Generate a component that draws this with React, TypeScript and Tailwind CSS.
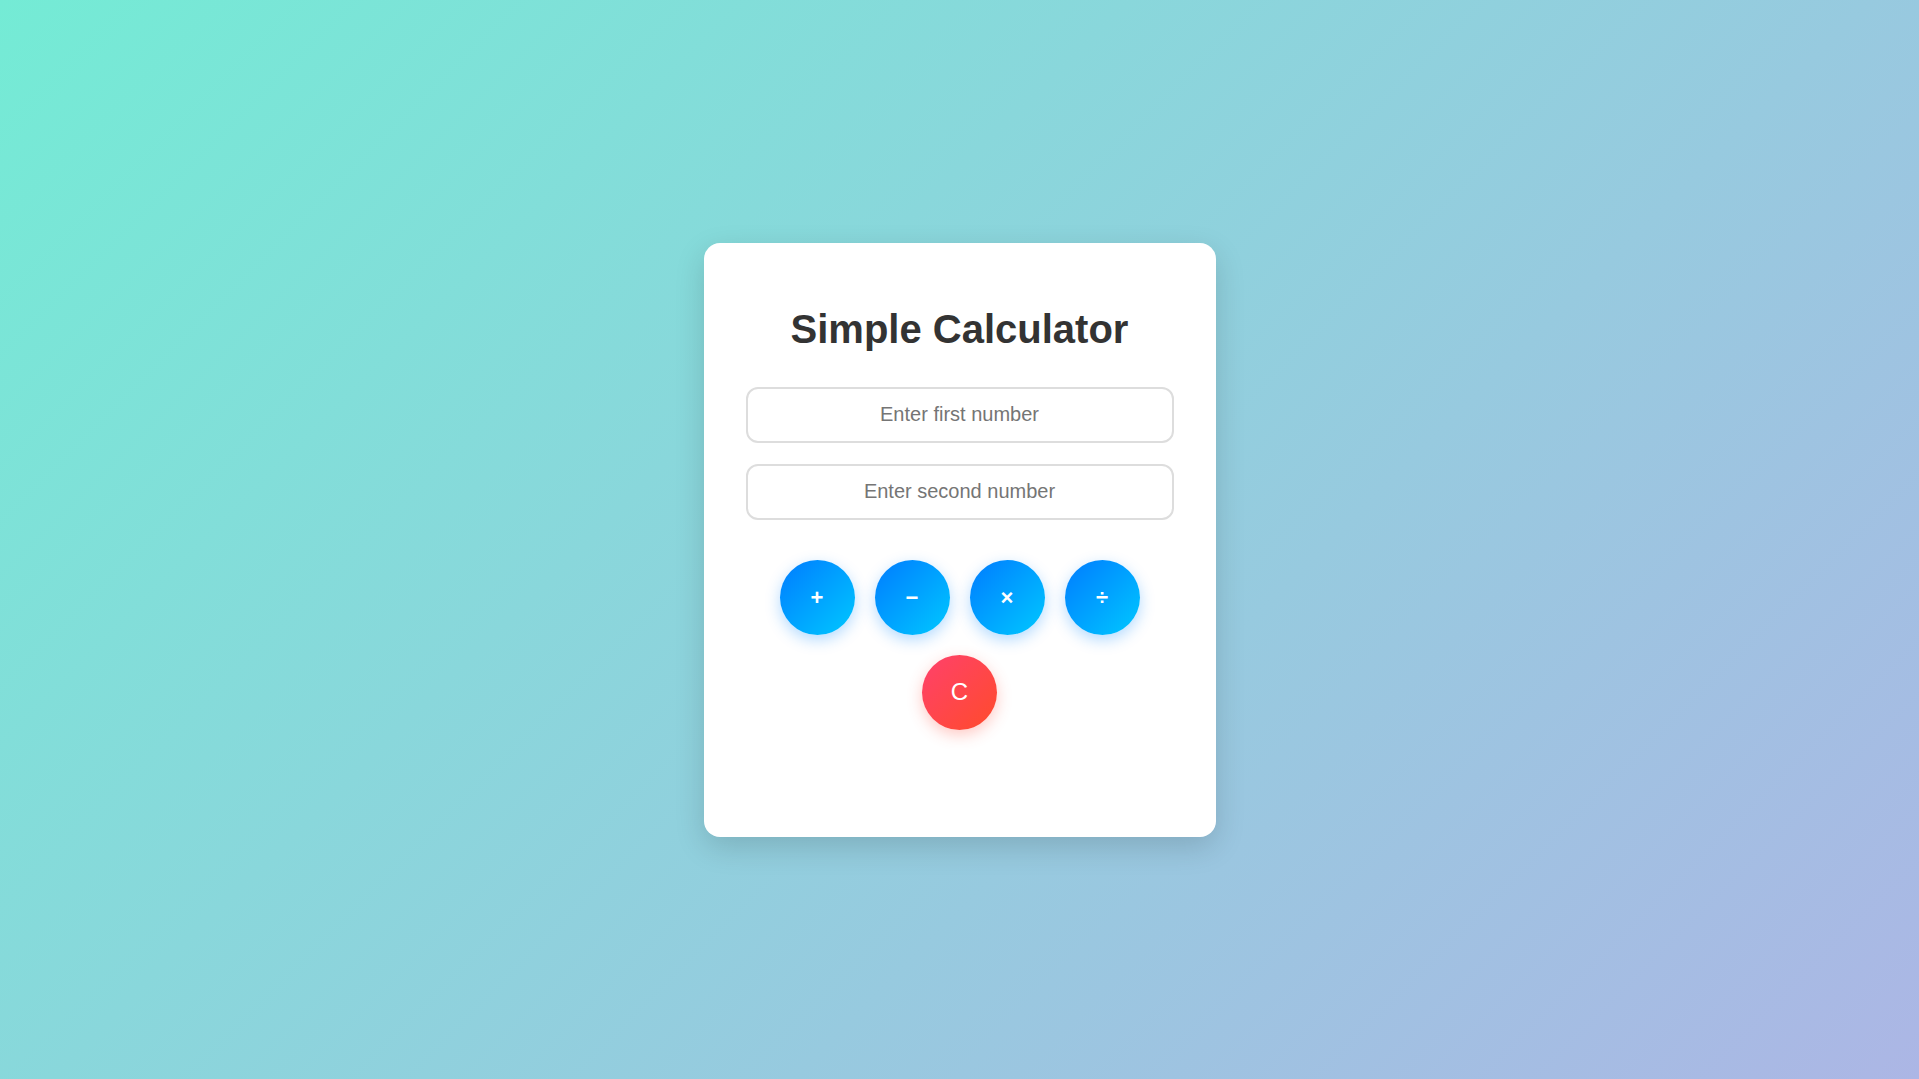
import React, { useState } from "react";

export default function App() {
  const [a, setA] = useState("");
  const [b, setB] = useState("");
  const ops = ["+", "\u2212", "\u00d7", "\u00f7"];
  return (
    <div
      className="min-h-screen w-full flex items-center justify-center bg-[linear-gradient(135deg,#74ebd5_0%,#acb6e5_100%)]"
      style={{ fontFamily: '"Liberation Sans", Arial, sans-serif' }}
    >
      <div className="w-[512px] h-[594px] bg-white rounded-[16px] shadow-[0_10px_30px_rgba(0,0,0,0.15)] px-[42px] pt-[63px] flex flex-col items-center">
        <h1 className="text-[40px] leading-[46px] font-bold text-[#333] text-center">Simple Calculator</h1>
        <input
          value={a}
          onChange={(e) => setA(e.target.value)}
          placeholder="Enter first number"
          className="mt-[35px] w-full h-[56px] border-2 border-[#ddd] rounded-[12px] text-center text-[20px] text-[#333] placeholder:text-[#757575] outline-none"
        />
        <input
          value={b}
          onChange={(e) => setB(e.target.value)}
          placeholder="Enter second number"
          className="mt-[21px] w-full h-[56px] border-2 border-[#ddd] rounded-[12px] text-center text-[20px] text-[#333] placeholder:text-[#757575] outline-none"
        />
        <div className="mt-[40px] flex gap-[20px]">
          {ops.map((o) => (
            <button
              key={o}
              className="w-[75px] h-[75px] rounded-full bg-[linear-gradient(135deg,#007cff_0%,#00c8ff_100%)] text-white text-[22px] font-bold shadow-[0_5px_15px_rgba(0,132,255,0.3)] flex items-center justify-center"
            >
              {o}
            </button>
          ))}
        </div>
        <div className="mt-[20px] flex">
          <button className="w-[75px] h-[75px] rounded-full bg-[linear-gradient(135deg,#ff416c_0%,#ff4b2b_100%)] text-white text-[24px] shadow-[0_5px_15px_rgba(255,75,60,0.3)] flex items-center justify-center">
            C
          </button>
        </div>
      </div>
    </div>
  );
}
